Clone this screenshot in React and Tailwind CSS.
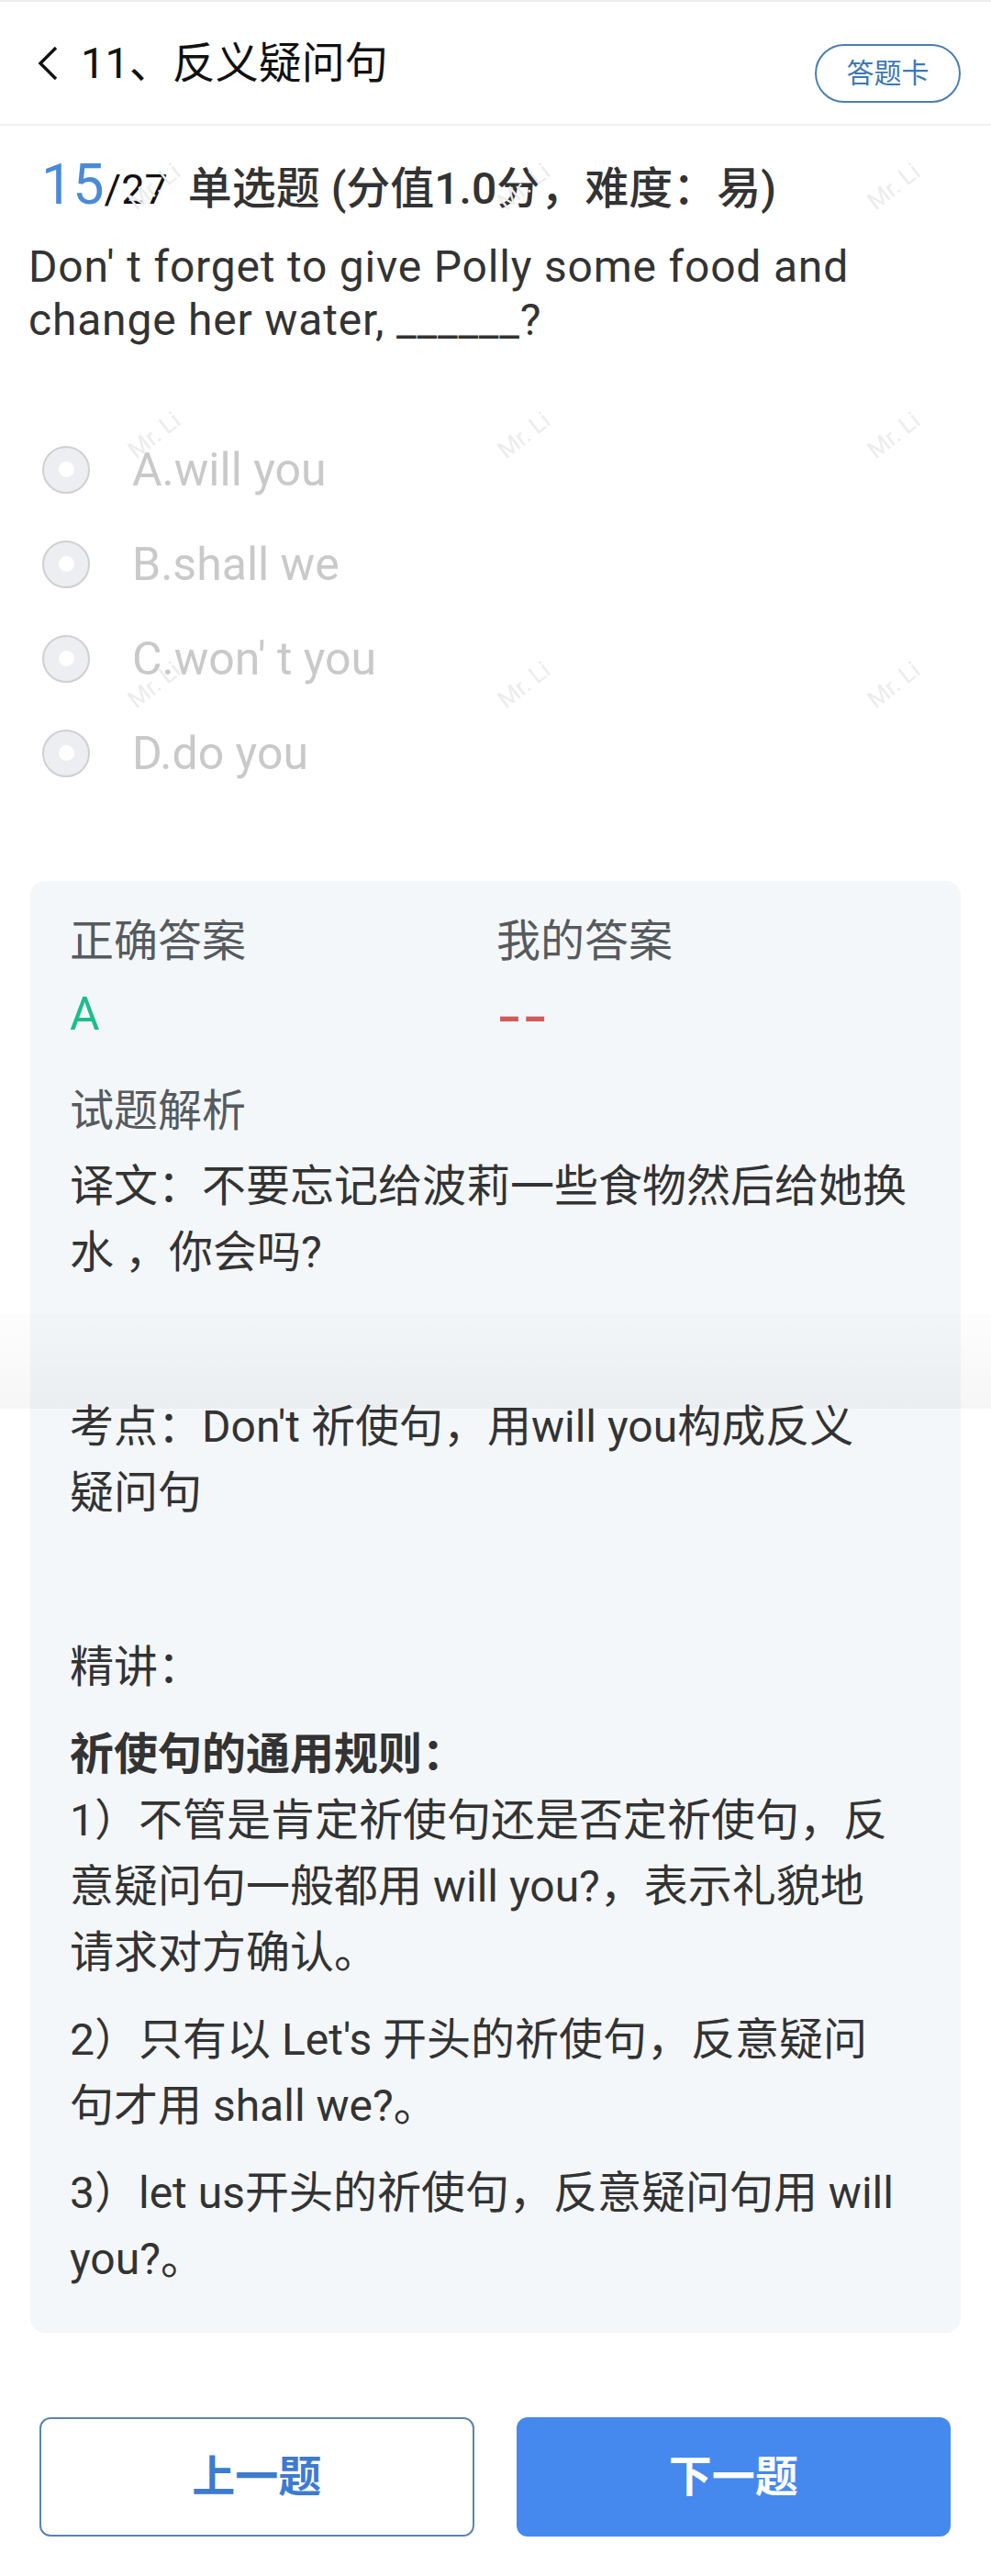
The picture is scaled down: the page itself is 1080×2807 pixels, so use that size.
export default function App() {
  const marks = [];
  const ys = [207, 478, 750];
  const xs = [172, 575, 978];
  const posClasses = {
    "207-172": "top-[190px] left-[136px]",
    "207-575": "top-[190px] left-[539px]",
    "207-978": "top-[190px] left-[942px]",
    "478-172": "top-[461px] left-[136px]",
    "478-575": "top-[461px] left-[539px]",
    "478-978": "top-[461px] left-[942px]",
    "750-172": "top-[733px] left-[136px]",
    "750-575": "top-[733px] left-[539px]",
    "750-978": "top-[733px] left-[942px]",
  };
  ys.forEach((y) =>
    xs.forEach((x) => {
      marks.push(
        <span
          key={`${y}-${x}`}
          className={`absolute ${posClasses[`${y}-${x}`]} -rotate-[38deg] text-[26px] leading-none text-[#ececec] pointer-events-none select-none whitespace-nowrap`}
        >
          Mr. Li
        </span>
      );
    })
  );

  const options = ["A.will you", "B.shall we", "C.won' t you", "D.do you"];

  return (
    <div className="relative w-[1080px] h-[2807px] bg-white overflow-hidden font-[Roboto,'Noto_Sans_CJK_SC',sans-serif]">
      {/* Header */}
      <header className="h-[137px] border-t-2 border-b-2 border-t-[#ececec] border-b-[#f0f0f0] flex items-center justify-between pl-[40px] pr-[33px]">
        <div className="flex items-center">
          <svg width="26" height="40" viewBox="0 0 26 40">
            <polyline
              points="21,3 4,20 21,37"
              fill="none"
              stroke="#111111"
              strokeWidth="3.4"
              strokeLinejoin="miter"
            />
          </svg>
          <span className="ml-[22px] text-[47px] leading-none text-[#111]">
            11、反义疑问句
          </span>
        </div>
        <button className="self-start mt-[46px] w-[159px] h-[64px] rounded-full border-2 border-[#4a7fb0] text-[#3d78b6] text-[30px] leading-none flex items-center justify-center">
          答题卡
        </button>
      </header>

      {/* Question meta */}
      <div className="mt-[34px] h-[61px] pl-[45px] flex items-baseline">
        <span className="text-[61px] leading-none text-[#4a8ad6]">15</span>
        <span className="text-[45px] leading-none text-[#111]">/27</span>
        <span className="ml-[22px] text-[48px] leading-none font-medium text-[#333]">
          单选题 (分值1.0分，难度：易)
        </span>
      </div>

      {/* Question text */}
      <p className="mt-[30px] pl-[31px] pr-[33px] text-[48px] leading-[58px] tracking-[0.8px] text-[#333]">
        Don' t forget to give Polly some food and change her water, ______?
      </p>

      {/* Options */}
      <div className="mt-[82px] pl-[46px]">
        {options.map((o) => (
          <div key={o} className="h-[103px] flex items-center">
            <div className="w-[52px] h-[52px] rounded-full border-2 border-[#d0d0d2] bg-[#eceef1] flex items-center justify-center">
              <div className="w-[17px] h-[17px] rounded-full bg-white" />
            </div>
            <span className="ml-[46px] text-[50px] leading-none text-[#c9c9c9]">
              {o}
            </span>
          </div>
        ))}
      </div>

      {/* Answer card */}
      <div className="mt-[88px] mx-[33px] rounded-[16px] bg-[#f3f7fa] pt-[30px] pl-[43px] pr-[20px] pb-[44px]">
        <div className="grid grid-cols-[465px_1fr] text-[48px] leading-[72px] text-[#565a5e]">
          <div>正确答案</div>
          <div>我的答案</div>
        </div>
        <div className="mt-[7px] grid grid-cols-[465px_1fr] text-[50px] leading-[72px]">
          <div className="text-[#1dbd8c]">A</div>
          <div className="text-[#cf5b5b] text-[48px]">
            <span className="inline-block origin-left scale-x-150 font-bold translate-y-[4px]">
              --
            </span>
          </div>
        </div>
        <div className="mt-[34px] text-[48px] leading-[72px] text-[#565a5e]">
          试题解析
        </div>
        <div className="mt-[10px] flex flex-col gap-[23px] text-[48px] leading-[72px] text-[#333] whitespace-nowrap">
          <p>
            译文：不要忘记给波莉一些食物然后给她换
            <br />
            水 ，你会吗?
          </p>
          <p>
            <br />
          </p>
          <p>
            考点：Don't 祈使句，用will you构成反义
            <br />
            疑问句
          </p>
          <p>
            <br />
          </p>
          <p>精讲：</p>
          <p>
            <strong className="font-bold">祈使句的通用规则：</strong>
            <br />
            1）不管是肯定祈使句还是否定祈使句，反
            <br />
            意疑问句一般都用 will you?，表示礼貌地
            <br />
            请求对方确认。
          </p>
          <p>
            2）只有以 Let's 开头的祈使句，反意疑问
            <br />
            句才用 shall we?。
          </p>
          <p>
            3）let us开头的祈使句，反意疑问句用 will
            <br />
            you?。
          </p>
        </div>
      </div>

      {/* Bottom buttons */}
      <div className="mt-[92px] pl-[43px] pr-[44px] grid grid-cols-2 gap-[46px]">
        <button className="h-[130px] rounded-[12px] border-2 border-[#5b84b1] bg-white text-[#3d7bd0] text-[47px] font-bold flex items-center justify-center">
          上一题
        </button>
        <button className="h-[130px] rounded-[12px] bg-[#4589ee] text-white text-[47px] font-bold flex items-center justify-center">
          下一题
        </button>
      </div>

      {/* Watermarks */}
      {marks}

      {/* stitched screenshot band */}
      <div className="absolute left-0 top-[1432px] w-full h-[103px] bg-linear-to-b from-[rgba(0,0,0,0.008)] to-[rgba(0,0,0,0.035)] pointer-events-none" />
    </div>
  );
}
